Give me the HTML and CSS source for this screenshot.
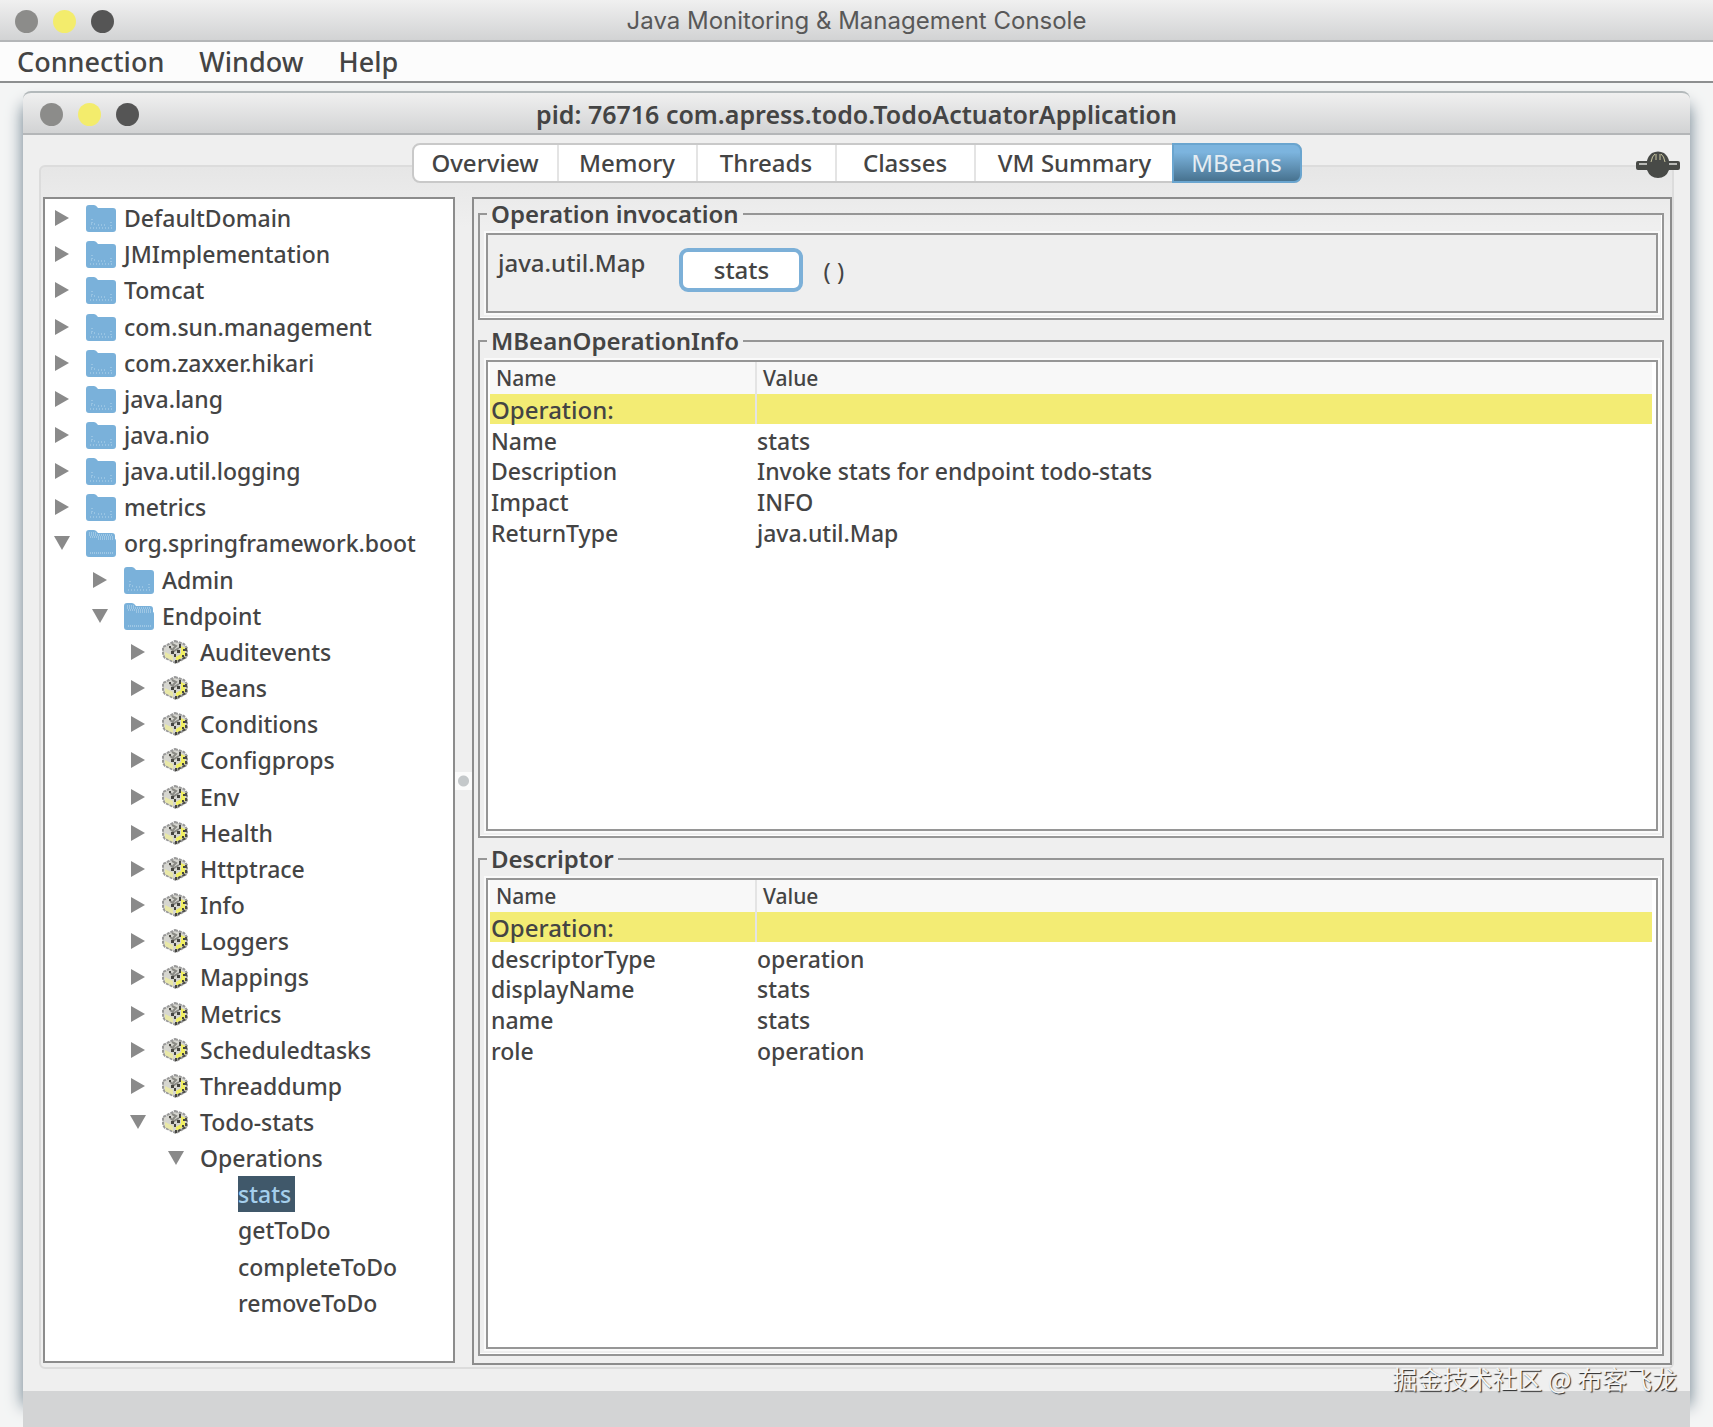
FILE: index.html
```html
<!DOCTYPE html>
<html lang="en">
<head>
  <meta charset="UTF-8" />
  <title>Java Monitoring &amp; Management Console</title>
  <link rel="stylesheet" href="styles.css">
</head>
<body>
  <!-- Shared icons -->
  <svg class="defs" aria-hidden="true">
    <symbol id="right" viewBox="0 0 16 16"><path d="M1 0L15 8L1 16Z" fill="#8a8a8a"/></symbol>
    <symbol id="down" viewBox="0 0 16 16"><path d="M0 1H16L8 15Z" fill="#8a8a8a"/></symbol>
    <symbol id="folder" viewBox="0 0 30 28">
      <path d="M0 4Q0 1 3 1H8Q10 1 12 4H27Q30 4 30 7V25Q30 28 27 28H3Q0 28 0 25Z" fill="#7ab1da"/>
      <path d="M6 15V21M5 20H9M12 21H21M25 18V24M4 24H27" fill="none" stroke="#b5d6ec" stroke-dasharray="1 2"/>
    </symbol>
    <symbol id="folder-open" viewBox="0 0 30 28">
      <path d="M0 4Q0 1 3 1H8Q10 1 12 4H26Q29 4 29 7V10Q30 10 30 12V25Q30 28 27 28H3Q0 28 0 25Z" fill="#7ab1da"/>
      <path d="M3 4H10M3 6H27M4 8H27M12 10H27M4 24H27" stroke="#c3def0" stroke-dasharray="1 1"/>
    </symbol>
    <symbol id="bean" viewBox="0 0 26 24">
      <path d="M13 1L22 4L25 8V17L14 23L3 18L1 15V7Z" fill="#d6d6d0" stroke="#999" stroke-width="2" stroke-dasharray="3 1"/>
      <path d="M19 6L23 8V16L14 21V17L19 14Z" fill="#f1ef62"/>
      <path d="M3 12L11 16V21L3 17Z" fill="#e9e8a8"/>
      <path d="M8 8L12 11L17 8M10 4L14 6L11 9" fill="none" stroke="#8a8a84" stroke-width="2"/>
      <path d="M24 8V17L14 22" fill="none" stroke="#4b4b46" stroke-width="2" stroke-dasharray="3 2"/>
      <path d="M17 4H19V8H17ZM9 11H12V14H9ZM15 10H18V13H15ZM21 9H23V11H21ZM12 14H14V17H12ZM20 15H22V17H20ZM7 6H9V8H7ZM13 20H15V23H13Z" fill="#454540"/>
    </symbol>
  </svg>

  <header class="titlebar">
    <span class="lights"><i></i><i class="yellow"></i><i class="dark"></i></span>
    <h1>Java Monitoring &amp; Management Console</h1>
  </header>
  <nav class="menubar">
    <button>Connection</button>
    <button>Window</button>
    <button>Help</button>
  </nav>

  <main class="desktop">
    <section class="window">
      <header class="titlebar inner">
        <span class="lights"><i></i><i class="yellow"></i><i class="dark"></i></span>
        <h2>pid: 76716 com.apress.todo.TodoActuatorApplication</h2>
      </header>

      <div class="content">
        <div class="tabs" role="tablist">
          <button role="tab">Overview</button>
          <button role="tab">Memory</button>
          <button role="tab">Threads</button>
          <button role="tab">Classes</button>
          <button role="tab" class="wide">VM Summary</button>
          <button role="tab" class="active" aria-selected="true">MBeans</button>
        </div>
        <svg class="plug" viewBox="0 0 44 28" aria-label="Connected">
          <path d="M2 10H11Q12 5 16 2Q22 -1 28 2Q32 5 33 10H42Q44 10 44 12V17Q44 19 42 19H33Q30 27 22 27Q14 27 11 19H2Q0 19 0 17V12Q0 10 2 10Z" fill="#484a47"/>
          <path d="M3 13H11M33 13H41" stroke="#b9bab7" stroke-width="2"/>
          <path d="M15 11Q16 5 19 3M20 9V3M24 9V3M29 11Q28 5 25 3" fill="none" stroke="#c9c6a0"/>
        </svg>

        <div class="pane">
          <ul class="tree">
            <li><svg class="arrow"><use href="#right"/></svg><svg class="folder"><use href="#folder"/></svg>DefaultDomain</li>
            <li><svg class="arrow"><use href="#right"/></svg><svg class="folder"><use href="#folder"/></svg>JMImplementation</li>
            <li><svg class="arrow"><use href="#right"/></svg><svg class="folder"><use href="#folder"/></svg>Tomcat</li>
            <li><svg class="arrow"><use href="#right"/></svg><svg class="folder"><use href="#folder"/></svg>com.sun.management</li>
            <li><svg class="arrow"><use href="#right"/></svg><svg class="folder"><use href="#folder"/></svg>com.zaxxer.hikari</li>
            <li><svg class="arrow"><use href="#right"/></svg><svg class="folder"><use href="#folder"/></svg>java.lang</li>
            <li><svg class="arrow"><use href="#right"/></svg><svg class="folder"><use href="#folder"/></svg>java.nio</li>
            <li><svg class="arrow"><use href="#right"/></svg><svg class="folder"><use href="#folder"/></svg>java.util.logging</li>
            <li><svg class="arrow"><use href="#right"/></svg><svg class="folder"><use href="#folder"/></svg>metrics</li>
            <li><svg class="arrow"><use href="#down"/></svg><svg class="folder"><use href="#folder-open"/></svg>org.springframework.boot</li>
            <li class="l2"><svg class="arrow"><use href="#right"/></svg><svg class="folder"><use href="#folder"/></svg>Admin</li>
            <li class="l2"><svg class="arrow"><use href="#down"/></svg><svg class="folder"><use href="#folder-open"/></svg>Endpoint</li>
            <li class="l3"><svg class="arrow"><use href="#right"/></svg><svg class="bean"><use href="#bean"/></svg>Auditevents</li>
            <li class="l3"><svg class="arrow"><use href="#right"/></svg><svg class="bean"><use href="#bean"/></svg>Beans</li>
            <li class="l3"><svg class="arrow"><use href="#right"/></svg><svg class="bean"><use href="#bean"/></svg>Conditions</li>
            <li class="l3"><svg class="arrow"><use href="#right"/></svg><svg class="bean"><use href="#bean"/></svg>Configprops</li>
            <li class="l3"><svg class="arrow"><use href="#right"/></svg><svg class="bean"><use href="#bean"/></svg>Env</li>
            <li class="l3"><svg class="arrow"><use href="#right"/></svg><svg class="bean"><use href="#bean"/></svg>Health</li>
            <li class="l3"><svg class="arrow"><use href="#right"/></svg><svg class="bean"><use href="#bean"/></svg>Httptrace</li>
            <li class="l3"><svg class="arrow"><use href="#right"/></svg><svg class="bean"><use href="#bean"/></svg>Info</li>
            <li class="l3"><svg class="arrow"><use href="#right"/></svg><svg class="bean"><use href="#bean"/></svg>Loggers</li>
            <li class="l3"><svg class="arrow"><use href="#right"/></svg><svg class="bean"><use href="#bean"/></svg>Mappings</li>
            <li class="l3"><svg class="arrow"><use href="#right"/></svg><svg class="bean"><use href="#bean"/></svg>Metrics</li>
            <li class="l3"><svg class="arrow"><use href="#right"/></svg><svg class="bean"><use href="#bean"/></svg>Scheduledtasks</li>
            <li class="l3"><svg class="arrow"><use href="#right"/></svg><svg class="bean"><use href="#bean"/></svg>Threaddump</li>
            <li class="l3"><svg class="arrow"><use href="#down"/></svg><svg class="bean"><use href="#bean"/></svg>Todo-stats</li>
            <li class="l4"><svg class="arrow"><use href="#down"/></svg>Operations</li>
            <li class="leaf"><span class="selected">stats</span></li>
            <li class="leaf">getToDo</li>
            <li class="leaf">completeToDo</li>
            <li class="leaf">removeToDo</li>
          </ul>

          <div class="splitter"><span></span></div>

          <div class="details">
            <fieldset>
              <legend>Operation invocation</legend>
              <div class="box invoke">
                <span class="type">java.util.Map</span>
                <button>stats</button>
                <span class="parens">( )</span>
              </div>
            </fieldset>

            <fieldset class="grow">
              <legend>MBeanOperationInfo</legend>
              <div class="box sheet">
                <table>
                  <thead>
                    <tr><th>Name</th><th>Value</th></tr>
                  </thead>
                  <tbody>
                    <tr class="mark"><td>Operation:</td><td></td></tr>
                    <tr><td>Name</td><td>stats</td></tr>
                    <tr><td>Description</td><td>Invoke stats for endpoint todo-stats</td></tr>
                    <tr><td>Impact</td><td>INFO</td></tr>
                    <tr><td>ReturnType</td><td>java.util.Map</td></tr>
                  </tbody>
                </table>
              </div>
            </fieldset>

            <fieldset class="grow">
              <legend>Descriptor</legend>
              <div class="box sheet">
                <table>
                  <thead>
                    <tr><th>Name</th><th>Value</th></tr>
                  </thead>
                  <tbody>
                    <tr class="mark"><td>Operation:</td><td></td></tr>
                    <tr><td>descriptorType</td><td>operation</td></tr>
                    <tr><td>displayName</td><td>stats</td></tr>
                    <tr><td>name</td><td>stats</td></tr>
                    <tr><td>role</td><td>operation</td></tr>
                  </tbody>
                </table>
              </div>
            </fieldset>
          </div>
        </div>
      </div>
    </section>
    <div class="strip"></div>
  </main>

  <div class="watermark">掘金技术社区 @ 布客飞龙</div>
</body>
</html>
```
FILE: styles.css
```css
* {
  box-sizing: border-box;
}
body {
  margin: 0;
  min-height: 100vh;
  display: flex;
  flex-direction: column;
  position: relative;
  background: #f4f5f5;
  color: #444;
  font: 500 24px/30px "Noto Sans", sans-serif;
}
button {
  border: none;
  background: none;
  color: inherit;
  font: inherit;
  padding: 0;
}
.defs {
  position: absolute;
  width: 0;
  height: 0;
}

/* Title bars */
.titlebar {
  display: grid;
  grid-template-columns: 1fr auto 1fr;
  align-items: center;
  height: 42px;
  padding: 2px 15px 0;
  background: linear-gradient(#f0f0f0, #d2d3d4);
  border-bottom: 2px solid #b4b6b8;
}
.titlebar h1, .titlebar h2 {
  margin: 0;
  font-size: 24px;
  font-weight: 500;
}
.titlebar h1 {
  font-family: Inter, sans-serif;
  font-weight: 400;
  color: #585858;
}
.titlebar h2 {
  font-size: 25px;
  font-weight: 600;
}
.titlebar.inner {
  height: 44px;
  padding: 2px 17px 0;
  border-top: 2px solid #b3b9bb;
  border-radius: 8px 8px 0 0;
}
.lights {
  display: flex;
  gap: 15px;
}
.lights i {
  width: 23px;
  height: 23px;
  border-radius: 50%;
  background: #8c8c8a;
}
.lights .yellow {
  background: #f3ec6c;
}
.lights .dark {
  background: #555;
}

.menubar {
  display: flex;
  gap: 35px;
  height: 41px;
  padding: 0 17px;
  background: #fcfcfc;
  border-bottom: 2px solid #8d8f90;
  font-size: 27px;
}

/* Inner window */
.desktop {
  flex: 1;
  display: flex;
  flex-direction: column;
  padding: 8px 23px 0;
}
.window {
  flex: 1;
  display: flex;
  flex-direction: column;
  background: #efefef;
  border-radius: 8px 8px 0 0;
  box-shadow: 0 14px 16px 1px #768894;
  z-index: 1;
}
.strip {
  height: 36px;
  background: #d3d4d5;
  z-index: 2;
}
.content {
  flex: 1;
  display: flex;
  flex-direction: column;
  position: relative;
  padding: 8px 16px 22px;
}
.tabs {
  align-self: center;
  display: flex;
  height: 40px;
  background: #fff;
  border: 2px solid #c9c9c9;
  border-radius: 8px;
  z-index: 1;
}
.tabs button {
  width: 139px;
  border-right: 2px solid #e4e4e4;
}
.tabs button:first-child {
  width: 145px;
}
.tabs .wide {
  width: 198px;
  border-right: none;
}
.tabs .active {
  width: 130px;
  margin: -2px;
  border: 2px solid #6aa5cf;
  border-radius: 0 8px 8px 0;
  background: linear-gradient(#7cb4de 20%, #47728f);
  color: #e4edf3;
  font-weight: 400;
}
.plug {
  position: absolute;
  top: 16px;
  right: 10px;
  width: 44px;
  height: 28px;
  z-index: 1;
}
.pane {
  flex: 1;
  display: flex;
  margin-top: -18px;
  padding: 30px 0 2px 2px;
  border: 2px solid #dcdcdc;
  border-radius: 6px;
  background: linear-gradient(#e6e6e6, #efefef 60px);
}

/* MBean tree */
.tree {
  width: 412px;
  margin: 0 0 2px;
  padding: 1px 0 40px 9px;
  list-style: none;
  display: flex;
  flex-direction: column;
  font-size: 23px;
  background: #fff;
  border: 2px solid #8c8c8c;
}
.tree li {
  flex: 1;
  min-height: 30px;
  display: flex;
  align-items: center;
}
.tree .l2 {
  padding-left: 38px;
}
.tree .l3 {
  padding-left: 76px;
}
.tree .l4 {
  padding-left: 114px;
}
.tree .leaf {
  padding-left: 184px;
}
.arrow {
  width: 16px;
  height: 16px;
  margin-right: 16px;
}
.folder {
  width: 30px;
  height: 28px;
  margin-right: 8px;
}
.bean {
  width: 26px;
  height: 24px;
  margin-right: 12px;
}
.selected {
  align-self: stretch;
  display: flex;
  align-items: center;
  padding-right: 4px;
  background: #40586a;
  color: #a5cfec;
}

.splitter {
  width: 17px;
  display: flex;
  align-items: center;
}
.splitter span {
  width: 100%;
  height: 18px;
  background: radial-gradient(circle, #c4c8ca 5px, #fbfbfb 6px);
}

/* Right side */
.details {
  flex: 1;
  display: flex;
  flex-direction: column;
  gap: 6px;
  padding: 0 6px 7px 4px;
  border: 2px solid #8c8c8c;
}
fieldset {
  min-width: 0;
  margin: 0;
  padding: 4px 4px 5px 6px;
  border: 2px solid #969696;
  box-shadow: inset -1px -1px #fff;
}
legend {
  margin-left: 1px;
  padding: 0 4px;
  font-weight: 600;
  line-height: 30px;
}
.grow {
  flex: 1;
  display: flex;
  flex-direction: column;
}
.box {
  border: 2px solid #969696;
  outline: 2px solid #fafafa;
}
.invoke {
  display: flex;
  align-items: flex-start;
  height: 80px;
  padding: 13px 10px;
}
.invoke button {
  width: 124px;
  height: 44px;
  margin: 0 20px 0 34px;
  background: #fff;
  border: 4px solid #7cb0d8;
  border-radius: 9px;
}
.parens {
  margin-top: 8px;
  font-weight: 400;
}
.sheet {
  flex: 1;
  background: #fff;
  padding: 0 4px 0 2px;
}
table {
  width: 100%;
  table-layout: fixed;
  border-collapse: collapse;
  font-size: 23px;
}
th, td {
  height: 31px;
  padding: 0 0 0 1px;
  text-align: left;
  font-weight: 500;
  line-height: 29px;
}
th {
  height: 32px;
  padding-left: 6px;
  font-size: 21px;
  background: #f8f8f8;
}
th:first-child {
  width: 266px;
}
th:first-child, .mark td:first-child {
  border-right: 2px solid #e4e4e4;
}
.mark td {
  background: #f3ec74;
  border-bottom: 2px solid #fff;
}
.mark td:first-child {
  font-size: 24px;
}

.watermark {
  position: absolute;
  right: 36px;
  bottom: 34px;
  z-index: 3;
  font: 25px/30px "Noto Sans CJK SC", sans-serif;
  color: #f4f4f4;
  text-shadow: 1px 1px 1px #222;
}
```
